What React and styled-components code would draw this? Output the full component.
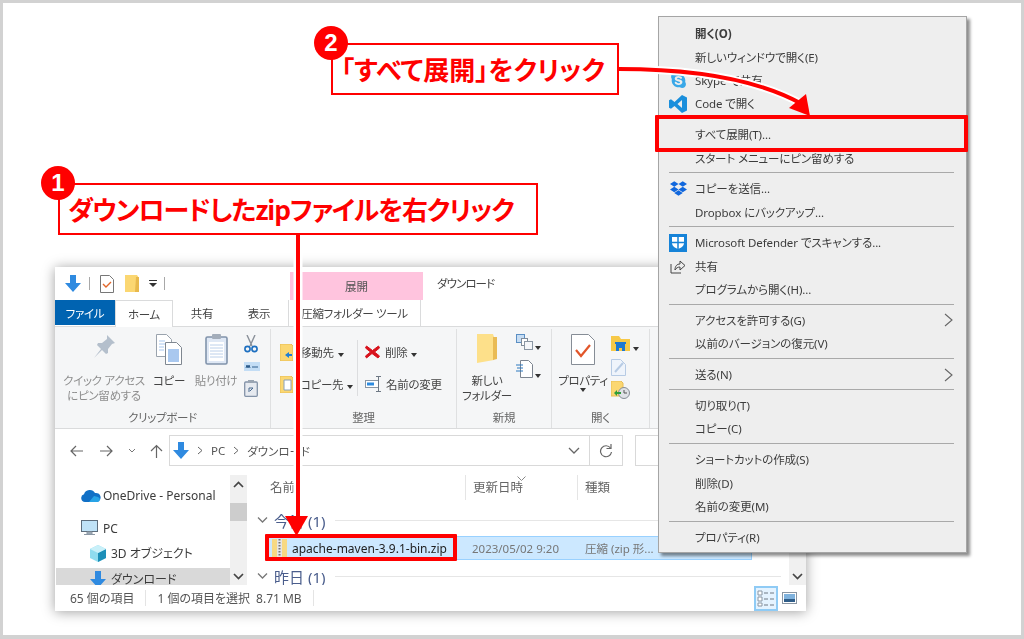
import React from 'react';
import styled, { createGlobalStyle } from 'styled-components';
import { FaDropbox, FaSkype } from 'react-icons/fa';

const UI_FONT = '"Noto Sans", "Noto Sans CJK JP", sans-serif';

const GlobalStyle = createGlobalStyle`
  html, body { margin: 0; padding: 0; background: #fff; overflow: hidden; }
  * { box-sizing: border-box; }
`;

const Canvas = styled.div`
  position: relative;
  width: 1024px;
  height: 639px;
  background: #fff;
  border: 3px solid #d2d2d2;
  border-bottom-width: 4px;
  overflow: hidden;
  font-family: ${UI_FONT};
  font-feature-settings: "palt";
`;

/* explorer window */
const Win = styled.div`
  position: absolute;
  left: 52px;
  top: 264px;
  width: 751px;
  height: 344px;
  display: flex;
  flex-direction: column;
  background: #fff;
  box-shadow: 0 1px 12px rgba(0, 0, 0, .38);
  font-size: 12px;
  color: #444;
  filter: blur(.4px);
`;

const TitleBar = styled.div`
  height: 33px;
  display: flex;
  align-items: center;
  padding-left: 10px;
  flex-shrink: 0;
`;

const QatSep = styled.span`
  width: 1px;
  height: 13px;
  background: #a8a8a8;
  margin: ${(p) => p.$m || '0 10px 0 8px'};
`;

const QatGap = styled.span`
  width: 11px;
`;

const QatDrop = styled.span`
  width: 8px;
  height: 8px;
  margin-left: 10px;
  border-top: 1px solid #333;
  position: relative;
  &::after {
    content: '';
    position: absolute;
    left: 0;
    top: 2px;
    border: 4px solid transparent;
    border-top: 4px solid #333;
  }
`;

const ContextTab = styled.div`
  margin-left: ${(p) => p.$ml}px;
  align-self: flex-end;
  width: 133px;
  height: 28px;
  flex-shrink: 0;
  background: #ffc4de;
  display: flex;
  align-items: center;
  justify-content: center;
  color: #555;
  font-size: 11.5px;
`;

const WinTitle = styled.div`
  margin-left: 14px;
  margin-bottom: 1px;
  color: #444;
  font-size: 11.5px;
  letter-spacing: -.9px;
`;

const TabBar = styled.div`
  height: 26px;
  display: flex;
  flex-shrink: 0;
  position: relative;
  z-index: 1;
  font-size: 11.5px;
  letter-spacing: -.3px;
`;

const FileTab = styled.div`
  width: 60px;
  height: 25px;
  background: #0063b1;
  color: #fff;
  display: flex;
  align-items: center;
  justify-content: center;
`;

const Tab = styled.div`
  width: ${(p) => p.$w}px;
  height: ${(p) => (p.$active ? 27 : 26)}px;
  display: flex;
  align-items: center;
  justify-content: center;
  background: #fff;
  color: #444;
  ${(p) => p.$active && 'border: 1px solid #dadbdc; border-bottom: 0;'}
  ${(p) => p.$tool && 'border-left: 1px solid #dadbdc; border-right: 1px solid #dadbdc;'}
  ${(p) => p.$ml && `margin-left: ${p.$ml}px;`}
`;

const Ribbon = styled.div`
  height: 103px;
  flex-shrink: 0;
  display: flex;
  background: #f5f6f7;
  border-top: 1px solid #dadbdc;
  border-bottom: 1px solid #dadbdc;
  font-size: 11.5px;
  letter-spacing: -.3px;
`;

const Group = styled.div`
  width: ${(p) => p.$w}px;
  margin: 2px 0 0;
  border-right: 1px solid #dfe0e1;
  display: flex;
  flex-direction: column;
  flex-shrink: 0;
`;

const GroupBody = styled.div`
  flex: 1;
  display: flex;
  padding-left: ${(p) => p.$pl}px;
  padding-top: 3px;
`;

const GroupLabel = styled.div`
  height: 22px;
  text-align: center;
  line-height: 23px;
  color: #666;
`;

const LargeBtn = styled.div`
  width: ${(p) => p.$w}px;
  margin-left: ${(p) => p.$ml || 0}px;
  display: flex;
  flex-direction: column;
  align-items: center;
  line-height: 15px;
  text-align: center;
  white-space: nowrap;
  color: ${(p) => (p.$off ? '#8e8e8e' : '#444')};
`;

const LargeIcon = styled.div`
  height: 41px;
  display: flex;
  align-items: flex-start;
  justify-content: center;
  padding-top: 2px;
`;

const SmallCol = styled.div`
  display: flex;
  flex-direction: column;
  align-items: flex-start;
  margin-left: ${(p) => p.$ml}px;
  padding-top: ${(p) => p.$pt || 0}px;
  gap: ${(p) => p.$gap || 0}px;
`;

const OrganizeCol = styled.div`
  display: flex;
  flex-direction: column;
  gap: 8px;
  padding-top: 8px;
  width: ${(p) => p.$w}px;
`;

const OrganizeRow = styled.div`
  height: 24px;
  display: flex;
  align-items: center;
  gap: ${(p) => p.$gap || 6}px;
  white-space: nowrap;
`;

const VSep = styled.div`
  width: 1px;
  height: 56px;
  margin: 8px 7px 0 0;
  background: #dcdddf;
`;

const Caret = styled.span`
  display: inline-block;
  width: 0;
  height: 0;
  margin-left: ${(p) => p.$ml ?? 4}px;
  border: 3px solid transparent;
  border-top: 4px solid #333;
  border-bottom: 0;
`;

const NavRow = styled.div`
  height: 38px;
  flex-shrink: 0;
  display: flex;
  align-items: center;
  padding: 5px 0 0 14px;
`;

const NavBtn = styled.svg`
  width: ${(p) => p.$w || 15}px;
  height: 14px;
  margin-right: ${(p) => p.$mr}px;
  flex-shrink: 0;
`;

const AddressBox = styled.div`
  width: 421px;
  height: 31px;
  border: 1px solid #d9d9d9;
  display: flex;
  align-items: center;
  padding-left: 3px;
  gap: 8px;
  position: relative;
`;

const Crumb = styled.span`
  color: #555;
  font-size: 11.5px;
`;

const CrumbSep = styled.svg`
  width: 6px;
  height: 9px;
`;

const AddressDrop = styled.svg`
  position: absolute;
  right: 9px;
  top: 11px;
  width: 12px;
  height: 8px;
`;

const RefreshBox = styled.div`
  width: 33px;
  height: 31px;
  border: 1px solid #d9d9d9;
  border-left: 0;
  display: flex;
  align-items: center;
  justify-content: center;
`;

const SearchBox = styled.div`
  width: 170px;
  height: 31px;
  margin-left: 12px;
  border: 1px solid #d9d9d9;
`;

const Main = styled.div`
  flex: 1;
  min-height: 0;
  display: flex;
  overflow: hidden;
`;

const NavPane = styled.div`
  width: 175px;
  padding-top: 17px;
  flex-shrink: 0;
  overflow: hidden;
`;

const TreeRow = styled.div`
  height: 22px;
  margin-top: ${(p) => p.$mt || 0}px;
  display: flex;
  align-items: center;
  gap: ${(p) => p.$gap || 5}px;
  padding-left: ${(p) => p.$pl}px;
  margin-left: ${(p) => (p.$on ? 1 : 0)}px;
  background: ${(p) => (p.$on ? '#d9d9d9' : 'transparent')};
  color: #3b3b3b;
  white-space: nowrap;
`;

const ScrollBar = styled.div`
  width: 17px;
  flex-shrink: 0;
  background: #f0f0f0;
  margin-top: ${(p) => p.$mt || 0}px;
  display: flex;
  flex-direction: column;
  align-items: center;
  position: relative;
`;

const ScrollArrow = styled.svg`
  width: 11px;
  height: 8px;
  margin-top: ${(p) => p.$mt}px;
  flex-shrink: 0;
`;

const ScrollThumb = styled.div`
  width: 17px;
  height: 18px;
  margin-top: 14px;
  background: #cdcdcd;
`;

const FileList = styled.div`
  flex: 1;
  min-width: 0;
  padding-top: 8px;
  position: relative;
`;

const HeaderRow = styled.div`
  height: 25px;
  display: flex;
  align-items: center;
  color: #666;
  position: relative;
`;

const HeaderCell = styled.div`
  width: ${(p) => p.$w}px;
  height: 25px;
  line-height: 26px;
  padding-left: ${(p) => p.$pl}px;
  ${(p) => p.$line && 'border-right: 1px solid #e5e5e5;'}
  font-size: 12.5px;
`;

const SortMark = styled.svg`
  position: absolute;
  left: 270px;
  top: 1px;
  width: 9px;
  height: 5px;
`;

const GroupRow = styled.div`
  height: 22px;
  margin-top: ${(p) => p.$mt}px;
  padding-left: 10px;
  display: flex;
  align-items: center;
  color: #4a5d8c;
  font-size: 15px;
  gap: 6px;
  margin-right: 8px;
  &::after {
    content: '';
    flex: 1;
    height: 1px;
    margin-left: 4px;
    background: #e6e6e6;
  }
`;

const FileRow = styled.div`
  width: 485px;
  height: 24px;
  margin: 5px 0 0 20px;
  background: #cce8ff;
  border: 1px solid #99d1ff;
  display: flex;
  align-items: center;
  padding-left: 4px;
  color: #555;
`;

const FileName = styled.span`
  width: 185px;
  padding-left: 5px;
  color: #222;
  white-space: nowrap;
`;

const FileCell = styled.span`
  width: ${(p) => p.$w}px;
  color: #777;
  font-size: 11.5px;
  white-space: nowrap;
`;

const StatusBar = styled.div`
  height: 26px;
  flex-shrink: 0;
  display: flex;
  align-items: center;
  padding-left: 15px;
  color: #555;
  position: relative;
`;

const StatusText = styled.span`
  margin-left: ${(p) => p.$ml || 0}px;
  white-space: nowrap;
`;

const StatusSep = styled.span`
  width: 1px;
  height: 16px;
  margin: 0 11px;
  background: #e4e4e4;
`;

const ViewButtons = styled.div`
  margin-left: auto;
  display: flex;
  align-items: center;
  padding-right: 9px;
  gap: 3px;
`;

const ViewBtn = styled.div`
  width: ${(p) => (p.$on ? 24 : 16)}px;
  height: ${(p) => (p.$on ? 25 : 16)}px;
  display: flex;
  align-items: center;
  justify-content: center;
  ${(p) => p.$on && 'background: #e5f3ff; border: 2px solid #8fcbf5;'}
`;

/* context menu */
const Menu = styled.div`
  position: absolute;
  left: 655px;
  top: 13px;
  width: 309px;
  height: 537px;
  padding: 4.5px 12px 0 10px;
  background: #eeeeee;
  border: 1px solid #a5a5a5;
  box-shadow: 3px 3px 3px rgba(0, 0, 0, .45);
  color: #3c3c3c;
  font-size: 11.5px;
  letter-spacing: -.1px;
  filter: blur(.35px);
`;

const MenuRow = styled.div`
  height: 23.4px;
  display: flex;
  align-items: center;
  position: relative;
  padding-left: 26px;
  white-space: nowrap;
  font-weight: ${(p) => (p.$bold ? 700 : 400)};
`;

const MenuIcon = styled.span`
  position: absolute;
  left: 0;
  top: 3px;
  width: 18px;
  height: 18px;
  display: flex;
  align-items: center;
  justify-content: center;
`;

const MenuSep = styled.div`
  height: 1px;
  margin: 3px 0 3.4px;
  background: #a9a9a9;
`;

const SubArrow = styled.svg`
  position: absolute;
  right: 0;
  top: 5px;
  width: 10px;
  height: 14px;
`;

/* red annotations */
const Overlay = styled.svg`
  position: absolute;
  left: -3px;
  top: -3px;
  width: 1024px;
  height: 639px;
  pointer-events: none;
`;

const Callout = styled.div`
  position: absolute;
  left: ${(p) => p.$x}px;
  top: ${(p) => p.$y}px;
  width: ${(p) => p.$w}px;
  height: 52px;
  border: 2.5px solid #f00;
  background: #fff;
  color: #f00;
  font-family: "Noto Sans CJK JP", sans-serif;
  font-feature-settings: "palt";
  font-weight: 700;
  font-size: 26px;
  letter-spacing: ${(p) => p.$ls || 0}px;
  line-height: 48px;
  padding-left: ${(p) => p.$pl}px;
  white-space: nowrap;
`;

const Badge = styled.div`
  position: absolute;
  left: -19px;
  top: -19px;
  width: 34px;
  height: 34px;
  border-radius: 50%;
  background: #f00;
  color: #fff;
  font-family: "Liberation Sans", sans-serif;
  font-weight: 700;
  font-size: 24px;
  line-height: 34px;
  text-align: center;
  letter-spacing: 0;
`;

const Marker = styled.div`
  position: absolute;
  left: ${(p) => p.$x}px;
  top: ${(p) => p.$y}px;
  width: ${(p) => p.$w}px;
  height: ${(p) => p.$h}px;
  border: 4px solid #f00;
  border-radius: 1px;
`;

const Ico = ({ w, h, vb, children }) => (
  <svg width={w} height={h} viewBox={vb || `0 0 ${w} ${h}`}>{children}</svg>
);

const DownArrowIcon = ({ w = 16, h = 17 }) => (
  <Ico w={w} h={h} vb="0 0 16 17">
    <path d="M5 0h6v8h5l-8 9-8-9h5z" fill="#2f8ae0" />
  </Ico>
);

const CheckDocIcon = ({ w = 14, h = 18 }) => (
  <Ico w={w} h={h} vb="0 0 14 18">
    <path d="M.5.5h9l4 4v13H.5z" fill="#fff" stroke="#777" />
    <path d="M3 9l3 3 5-5" fill="none" stroke="#e2672a" strokeWidth="1.4" />
  </Ico>
);

const FolderIcon = ({ w = 14, h = 17 }) => (
  <Ico w={w} h={h} vb="0 0 14 17">
    <path d="M0 0h12l2 3v14H0z" fill="#fbd772" />
    <path d="M11 2h3v15h-4z" fill="#e8b94c" />
  </Ico>
);

const PinIcon = () => (
  <Ico w={24} h={24}>
    <path d="M15 1l8 8-3 1-4 5 0 4-2 1-4-4-8 8 7-9-4-4 1-2 4 0 5-4z" fill="#b4bfcc" />
  </Ico>
);

const CopyIcon = () => (
  <Ico w={26} h={31}>
    <path d="M.5.5h10l5 5v17H.5z" fill="#fff" stroke="#9aa3ad" />
    <path d="M9.5 8.5h11l5 5v17h-16z" fill="#fff" stroke="#7f8790" />
    <path d="M12 15h11v13H12z" fill="#a9c8ef" />
    <path d="M3 7h6M3 10h6M3 13h5M3 16h5" stroke="#a9c8ef" />
  </Ico>
);

const PasteIcon = () => (
  <Ico w={23} h={31}>
    <rect x="1" y="3" width="21" height="27" rx="1.5" fill="#dfe8f5" stroke="#8193ab" strokeWidth="1.6" />
    <path d="M4 8h15v19H4z" fill="#fff" />
    <path d="M5 11h13M5 14h13M5 17h13M5 20h13M5 23h13" stroke="#bcd0ea" />
    <rect x="7" y="0" width="9" height="5" rx="1" fill="#a3adba" />
  </Ico>
);

const ScissorsIcon = () => (
  <Ico w={14} h={18}>
    <path d="M3 0l5 11M11 0L6 11" stroke="#8a9099" strokeWidth="1.4" />
    <circle cx="3.5" cy="14" r="2.6" fill="none" stroke="#1d6fc0" strokeWidth="1.6" />
    <circle cx="10.5" cy="14" r="2.6" fill="none" stroke="#1d6fc0" strokeWidth="1.6" />
  </Ico>
);

const PathIcon = () => (
  <Ico w={16} h={9}>
    <rect width="16" height="9" fill="#c3ddf5" />
    <path d="M2 6l1-3 1 3 1-3 1 3M8 5h6" stroke="#2c5c8c" fill="none" />
  </Ico>
);

const ShortcutIcon = () => (
  <Ico w={14} h={17}>
    <rect x=".7" y="2" width="12.6" height="14.3" rx="1" fill="#e6eaf0" stroke="#8393a8" strokeWidth="1.3" />
    <rect x="4" y="0" width="6" height="3" fill="#9aa5b2" />
    <path d="M5 12V8h4M9 8l-3 3" stroke="#4b6a8e" fill="none" />
  </Ico>
);

const MoveIcon = ({ copy }) => (
  <Ico w={13} h={17}>
    <path d="M0 0h11l2 2v15H0z" fill="#fbd772" stroke="#e8bd55" />
    {copy
      ? <path d="M4 4h7v10H4z" fill="#fff" stroke="#8aa0b8" />
      : <path d="M5 11l4-3v2h3v2H9v2z" fill="#1f7fd6" />}
  </Ico>
);

const DeleteIcon = () => (
  <Ico w={15} h={14}>
    <path d="M1.5 1l6 4.5L13.5 1l1 2-5 4 5 4-1.500 2-6-4.500L1.500 13 .5 11l5-4-5-4z" fill="#d8121c" stroke="#d8121c" />
  </Ico>
);

const RenameIcon = () => (
  <Ico w={17} h={16}>
    <rect x=".5" y="4.500" width="13" height="7" fill="#fff" stroke="#8a96a3" />
    <rect x="2" y="6.500" width="7" height="3" fill="#2d8be0" />
    <path d="M11 .5h5M13.500.5v15M11 15.500h5" stroke="#6e7884" fill="none" />
  </Ico>
);

const NewFolderIcon = () => (
  <Ico w={21} h={29}>
    <path d="M0 0h16l1 3v23l-17 3z" fill="#fde08a" />
    <path d="M16 3h4v22l-4 1z" fill="#e9bb55" />
  </Ico>
);

const NewItemIcon = () => (
  <Ico w={17} h={16}>
    <rect x=".5" y=".5" width="8" height="8" fill="#c7ddf3" stroke="#5b8fc4" />
    <rect x="5.500" y="4.500" width="6" height="7" fill="#fff" stroke="#7f8b99" />
    <rect x="8.500" y="7.500" width="8" height="8" fill="#f4f6f9" stroke="#8a96a3" />
  </Ico>
);

const EasyAccessIcon = () => (
  <Ico w={17} h={18}>
    <path d="M4.500.5h8l4 4v13h-12z" fill="#fff" stroke="#7d8590" />
    <path d="M0 5h7M1 8h6M0 11h7" stroke="#2c78c0" strokeWidth="1.2" />
  </Ico>
);

const BigPropsIcon = () => (
  <Ico w={24} h={31}>
    <path d="M.5.500h17l6 6v24H.5z" fill="#fff" stroke="#868d96" />
    <path d="M5 16l5 6 9-11" fill="none" stroke="#e2562a" strokeWidth="2.200" />
  </Ico>
);

const OpenFolderIcon = () => (
  <Ico w={19} h={15}>
    <path d="M0 0h8l2 3h9v12H0z" fill="#f7c948" />
    <path d="M5 8h9v7h-3v-3H8v3H5z" fill="#1f78d1" />
    <rect x="4" y="6" width="11" height="2" fill="#1f78d1" />
  </Ico>
);

const EditDocIcon = () => (
  <Ico w={15} h={17}>
    <path d="M.5.500h9l5 5v11H.5z" fill="#eff4fb" stroke="#b7cbe4" />
    <path d="M4 13L12 4" stroke="#b7cbe4" strokeWidth="2" />
  </Ico>
);

const HistoryIcon = () => (
  <Ico w={19} h={18}>
    <path d="M0 0h10l2 2v13H0z" fill="#fbd772" stroke="#e8bd55" />
    <circle cx="13" cy="12" r="5.500" fill="#dfe2e6" stroke="#868d96" />
    <path d="M13 9v3h3" stroke="#555" fill="none" />
    <path d="M3 12l3-3v2h4v2H6v2z" fill="#2e9d3a" />
  </Ico>
);

const OneDriveIcon = () => (
  <Ico w={20} h={13}>
    <path d="M4 13a4 4 0 0 1-1-7.800A6 6 0 0 1 14 4a4.500 4.500 0 0 1 2 9z" fill="#1170c6" />
    <path d="M8 13l5-6 4 1a2.600 2.600 0 0 1 0 5z" fill="#27a3e6" />
  </Ico>
);

const PcIcon = () => (
  <Ico w={17} h={16}>
    <rect x=".5" y=".5" width="16" height="11" fill="#bfe2f7" stroke="#5d6d7c" />
    <path d="M6 12h5v2H6zM3 14.500h11" stroke="#8b98a5" fill="#a8b4bf" />
  </Ico>
);

const CubeIcon = () => (
  <Ico w={16} h={17}>
    <path d="M8 0l8 4v9l-8 4-8-4V4z" fill="#8fdcef" />
    <path d="M8 8l8-4v9l-8 4z" fill="#1c8fb8" />
    <path d="M8 0l8 4-8 4-8-4z" fill="#c9f0f9" />
  </Ico>
);

const ZipIcon = () => (
  <Ico w={15} h={20}>
    <path d="M0 1h15v18H0z" fill="#f7d983" />
    <path d="M5 1h5v18H5z" fill="#e6e6e6" />
    <path d="M7.500 1v18" stroke="#777" strokeDasharray="1.500 1.500" strokeWidth="2" />
  </Ico>
);

const RefreshIcon = () => (
  <Ico w={14} h={14}>
    <path d="M11.500 4A5.500 5.500 0 1 0 12.500 8" fill="none" stroke="#666" strokeWidth="1.200" />
    <path d="M12 0v4.500H7.500" fill="none" stroke="#666" strokeWidth="1.200" />
  </Ico>
);

const Chevron = ({ size = 11, color = '#555' }) => (
  <Ico w={size} h={size * 0.7} vb="0 0 11 7.700">
    <path d="M1 1.500L5.500 6 10 1.500" fill="none" stroke={color} strokeWidth="1.300" />
  </Ico>
);

const DetailsViewIcon = () => (
  <Ico w={18} h={17}>
    <path d="M1 1h4v4H1zM1 7h4v4H1zM1 13h4v3H1z" fill="#fff" stroke="#8a96a3" />
    <path d="M7 3h4M13 3h4M7 9h4M13 9h4M7 15h4M13 15h4" stroke="#6e7884" />
  </Ico>
);

const LargeViewIcon = () => (
  <Ico w={15} h={12}>
    <rect x=".5" y=".5" width="14" height="11" fill="#fff" stroke="#8a96a3" />
    <path d="M2 2h11v5H2z" fill="#7fb2dd" />
    <path d="M2 7h11v3H2z" fill="#2f5d88" />
  </Ico>
);

const VsCodeIcon = () => (
  <Ico w={18} h={18}>
    <path d="M13 0l5 2.400v13.200L13 18 5.500 11 2 13.800 0 12.800V5.200l2-1L5.500 7zM13 5L8.500 9l4.500 4z" fill="#1a8fdc" />
  </Ico>
);

const ShieldIcon = () => (
  <Ico w={18} h={18}>
    <rect width="18" height="18" fill="#1683d8" />
    <path d="M3 3h12v6c0 3-3 5-6 6-3-1-6-3-6-6z" fill="#fff" />
    <path d="M9 3v12M3 8.500h12" stroke="#1683d8" strokeWidth="1.500" />
  </Ico>
);

const ShareIcon = () => (
  <Ico w={16} h={16}>
    <path d="M1 6v9h10" fill="none" stroke="#444" />
    <path d="M5 12c0-4 2-6 5-6V3l5 4.500L10 12V9c-2 0-4 1-5 3z" fill="none" stroke="#444" />
  </Ico>
);

const menuItems = [
  { label: '開く(O)', bold: true },
  { label: '新しいウィンドウで開く(E)' },
  { label: 'Skype で共有', icon: <FaSkype size={17} color="#3aa8e8" /> },
  { label: 'Code で開く', icon: <VsCodeIcon /> },
  'sep',
  { label: 'すべて展開(T)...' },
  { label: 'スタート メニューにピン留めする' },
  'sep',
  { label: 'コピーを送信...', icon: <FaDropbox size={17} color="#1167dd" /> },
  { label: 'Dropbox にバックアップ...' },
  'sep',
  { label: 'Microsoft Defender でスキャンする...', icon: <ShieldIcon /> },
  { label: '共有', icon: <ShareIcon /> },
  { label: 'プログラムから開く(H)...' },
  'sep',
  { label: 'アクセスを許可する(G)', sub: true },
  { label: '以前のバージョンの復元(V)' },
  'sep',
  { label: '送る(N)', sub: true },
  'sep',
  { label: '切り取り(T)' },
  { label: 'コピー(C)' },
  'sep',
  { label: 'ショートカットの作成(S)' },
  { label: '削除(D)' },
  { label: '名前の変更(M)' },
  'sep',
  { label: 'プロパティ(R)' },
];

const ContextMenu = () => (
  <Menu>
    {menuItems.map((item, i) => (item === 'sep' ? <MenuSep key={i} /> : (
      <MenuRow key={i} $bold={item.bold}>
        {item.icon && <MenuIcon>{item.icon}</MenuIcon>}
        {item.label}
        {item.sub && (
          <SubArrow viewBox="0 0 10 14">
            <path d="M1 1l7 6-7 6" fill="none" stroke="#666" strokeWidth="1.100" />
          </SubArrow>
        )}
      </MenuRow>
    )))}
  </Menu>
);

const Explorer = () => (
  <Win>
    <TitleBar>
      <DownArrowIcon />
      <QatSep />
      <CheckDocIcon />
      <QatGap />
      <FolderIcon />
      <QatDrop />
      <QatSep $m="0 0 0 7px" />
      <ContextTab $ml={125}>展開</ContextTab>
      <WinTitle>ダウンロード</WinTitle>
    </TitleBar>
    <TabBar>
      <FileTab>ファイル</FileTab>
      <Tab $w={58} $active>ホーム</Tab>
      <Tab $w={58}>共有</Tab>
      <Tab $w={56}>表示</Tab>
      <Tab $w={133} $ml={1} $tool>圧縮フォルダー ツール</Tab>
    </TabBar>
    <Ribbon>
      <Group $w={216}>
        <GroupBody $pl={9}>
          <LargeBtn $w={80} $off>
            <LargeIcon><PinIcon /></LargeIcon>
            クイック アクセス
            <br />
            にピン留めする
          </LargeBtn>
          <LargeBtn $w={28} $ml={11}>
            <LargeIcon><CopyIcon /></LargeIcon>
            コピー
          </LargeBtn>
          <LargeBtn $w={44} $ml={11} $off>
            <LargeIcon><PasteIcon /></LargeIcon>
            貼り付け
          </LargeBtn>
          <SmallCol $ml={6} $pt={3} $gap={9}>
            <ScissorsIcon />
            <PathIcon />
            <ShortcutIcon />
          </SmallCol>
        </GroupBody>
        <GroupLabel>クリップボード</GroupLabel>
      </Group>
      <Group $w={186}>
        <GroupBody $pl={9}>
          <OrganizeCol $w={77}>
            <OrganizeRow $gap={7}>
              <MoveIcon />
              <span>移動先<Caret /></span>
            </OrganizeRow>
            <OrganizeRow $gap={7}>
              <MoveIcon copy />
              <span>コピー先<Caret /></span>
            </OrganizeRow>
          </OrganizeCol>
          <VSep />
          <OrganizeCol $w={90}>
            <OrganizeRow $gap={5}>
              <DeleteIcon />
              <span>削除<Caret /></span>
            </OrganizeRow>
            <OrganizeRow $gap={4}>
              <RenameIcon />
              <span>名前の変更</span>
            </OrganizeRow>
          </OrganizeCol>
        </GroupBody>
        <GroupLabel>整理</GroupLabel>
      </Group>
      <Group $w={95}>
        <GroupBody $pl={7}>
          <LargeBtn $w={46}>
            <LargeIcon><NewFolderIcon /></LargeIcon>
            新しい
            <br />
            フォルダー
          </LargeBtn>
          <SmallCol $ml={6} $pt={2} $gap={7}>
            <span><NewItemIcon /><Caret $ml={2} /></span>
            <span><EasyAccessIcon /><Caret $ml={2} /></span>
          </SmallCol>
        </GroupBody>
        <GroupLabel>新規</GroupLabel>
      </Group>
      <Group $w={98}>
        <GroupBody $pl={7}>
          <LargeBtn $w={48}>
            <LargeIcon><BigPropsIcon /></LargeIcon>
            プロパティ
            <Caret $ml={0} />
          </LargeBtn>
          <SmallCol $ml={4} $pt={4} $gap={5}>
            <span><OpenFolderIcon /><Caret $ml={3} /></span>
            <EditDocIcon />
            <HistoryIcon />
          </SmallCol>
        </GroupBody>
        <GroupLabel>開く</GroupLabel>
      </Group>
    </Ribbon>
    <NavRow>
      <NavBtn $mr={15} viewBox="0 0 15 14"><path d="M7 2L2 7l5 5M2 7h12" fill="none" stroke="#666" strokeWidth="1.200" /></NavBtn>
      <NavBtn $mr={14} viewBox="0 0 15 14"><path d="M8 2l5 5-5 5M13 7H1" fill="none" stroke="#666" strokeWidth="1.200" /></NavBtn>
      <NavBtn $mr={13} $w={8} viewBox="0 0 8 14"><path d="M1 5l3 3 3-3" fill="none" stroke="#777" /></NavBtn>
      <NavBtn $mr={5} viewBox="0 0 15 14"><path d="M2 7l5.500-5.500L13 7M7.500 2v12" fill="none" stroke="#666" strokeWidth="1.200" /></NavBtn>
      <AddressBox>
        <DownArrowIcon />
        <CrumbSep viewBox="0 0 6 9"><path d="M1 1l4 3.500L1 8" fill="none" stroke="#666" /></CrumbSep>
        <Crumb>PC</Crumb>
        <CrumbSep viewBox="0 0 6 9"><path d="M1 1l4 3.500L1 8" fill="none" stroke="#666" /></CrumbSep>
        <Crumb>ダウンロード</Crumb>
        <AddressDrop viewBox="0 0 12 8"><path d="M1 1l5 5 5-5" fill="none" stroke="#666" strokeWidth="1.300" /></AddressDrop>
      </AddressBox>
      <RefreshBox><RefreshIcon /></RefreshBox>
      <SearchBox />
    </NavRow>
    <Main>
      <NavPane>
        <TreeRow $pl={26} $gap={2}><OneDriveIcon />OneDrive - Personal</TreeRow>
        <TreeRow $pl={26} $mt={11}><PcIcon />PC</TreeRow>
        <TreeRow $pl={35} $mt={3}><CubeIcon />3D オブジェクト</TreeRow>
        <TreeRow $pl={34} $mt={4} $on><DownArrowIcon />ダウンロード</TreeRow>
      </NavPane>
      <ScrollBar $mt={8}>
        <ScrollArrow $mt={6} viewBox="0 0 11 8"><path d="M1 6l4.500-4.500L10 6" fill="none" stroke="#444" strokeWidth="1.700" /></ScrollArrow>
        <ScrollThumb />
        <ScrollArrow $mt={51} viewBox="0 0 11 8"><path d="M1 2l4.500 4.500L10 2" fill="none" stroke="#444" strokeWidth="1.700" /></ScrollArrow>
      </ScrollBar>
      <FileList>
        <HeaderRow>
          <HeaderCell $w={219} $pl={23} $line>名前</HeaderCell>
          <SortMark viewBox="0 0 9 5"><path d="M.5.5l4 4 4-4" fill="none" stroke="#888" /></SortMark>
          <HeaderCell $w={112} $pl={7} $line>更新日時</HeaderCell>
          <HeaderCell $w={100} $pl={7}>種類</HeaderCell>
        </HeaderRow>
        <GroupRow $mt={9}><Chevron size={11} color="#777" />今日 (1)</GroupRow>
        <FileRow>
          <ZipIcon />
          <FileName>apache-maven-3.9.1-bin.zip</FileName>
          <FileCell $w={113}>2023/05/02 9:20</FileCell>
          <FileCell $w={100}>圧縮 (zip 形...</FileCell>
        </FileRow>
        <GroupRow $mt={5}><Chevron size={11} color="#777" />昨日 (1)</GroupRow>
      </FileList>
      <ScrollBar>
        <ScrollArrow $mt={105} viewBox="0 0 11 8"><path d="M1 2l4.500 4.500L10 2" fill="none" stroke="#444" strokeWidth="1.700" /></ScrollArrow>
      </ScrollBar>
    </Main>
    <StatusBar>
      <StatusText>65 個の項目</StatusText>
      <StatusSep />
      <StatusText>1 個の項目を選択</StatusText>
      <StatusText $ml={6}>8.71 MB</StatusText>
      <StatusSep />
      <ViewButtons>
        <ViewBtn $on><DetailsViewIcon /></ViewBtn>
        <ViewBtn><LargeViewIcon /></ViewBtn>
      </ViewButtons>
    </StatusBar>
  </Win>
);

const Annotations = () => (
  <>
    <Marker $x={652} $y={112} $w={313} $h={37} />
    <Marker $x={262} $y={531} $w={192} $h={27} />
    <Overlay viewBox="0 0 1024 639">
      <path d="M298 235V520" stroke="#fff" strokeWidth="9" fill="none" />
      <path d="M298 235V520" stroke="#f00" strokeWidth="4" fill="none" />
      <path d="M285 516h23l-11.500 20z" fill="#f00" />
      <path d="M619 69C690 69 755 78 802 104" stroke="#fff" strokeWidth="8" fill="none" />
      <path d="M619 69C690 69 755 78 802 104" stroke="#f00" strokeWidth="4" fill="none" />
      <path d="M806 94l4 22-21-8z" fill="#f00" />
    </Overlay>
    <Callout $x={55} $y={180} $w={480} $pl={8} $ls={-1.100}>
      <Badge>1</Badge>
      ダウンロードしたzipファイルを右クリック
    </Callout>
    <Callout $x={328} $y={40} $w={288} $pl={8} $ls={.100}>
      <Badge>2</Badge>
      「すべて展開」をクリック
    </Callout>
  </>
);

const App = () => (
  <>
    <GlobalStyle />
    <Canvas>
      <Explorer />
      <ContextMenu />
      <Annotations />
    </Canvas>
  </>
);

export default App;
